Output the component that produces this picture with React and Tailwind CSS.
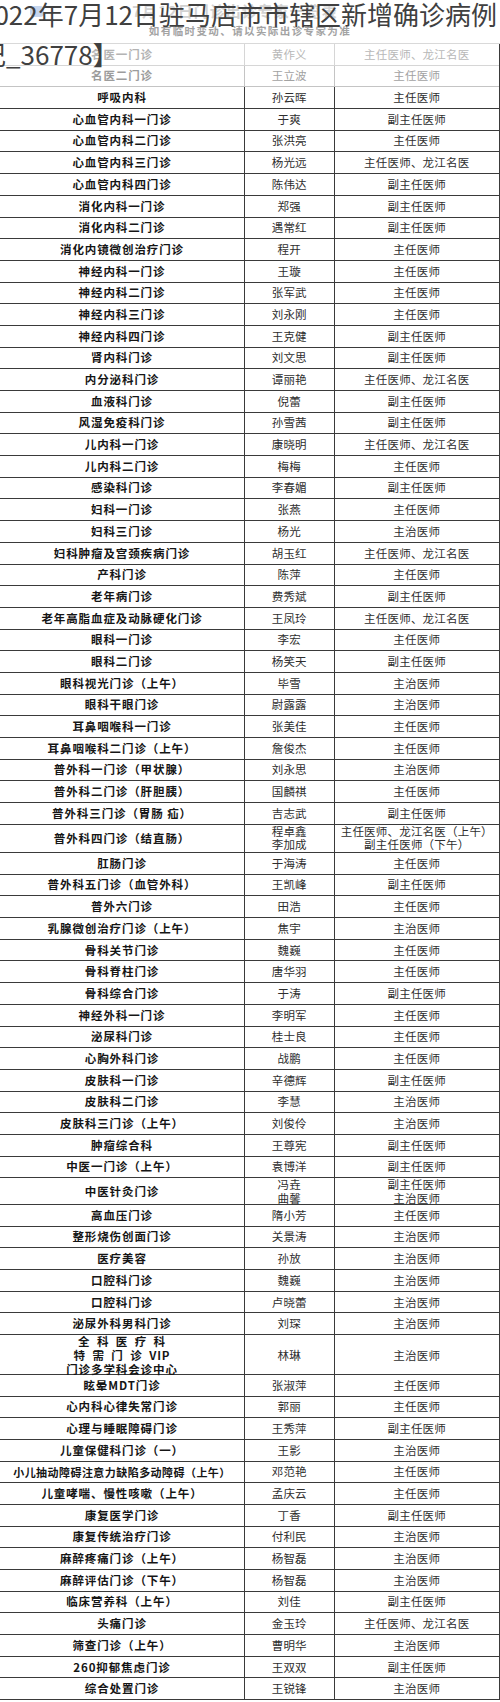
import React from "react";

// 门诊出诊专家表 + 覆盖在上方的大标题
const rows = [
  { d: "名医一门诊", n: "黄作义", t: "主任医师、龙江名医", fade: 1 },
  { d: "名医二门诊", n: "王立波", t: "主任医师", fade: 2 },
  { d: "呼吸内科", n: "孙云晖", t: "主任医师" },
  { d: "心血管内科一门诊", n: "于爽", t: "副主任医师" },
  { d: "心血管内科二门诊", n: "张洪亮", t: "主任医师" },
  { d: "心血管内科三门诊", n: "杨光远", t: "主任医师、龙江名医" },
  { d: "心血管内科四门诊", n: "陈伟达", t: "副主任医师" },
  { d: "消化内科一门诊", n: "郑强", t: "副主任医师" },
  { d: "消化内科二门诊", n: "遇常红", t: "副主任医师" },
  { d: "消化内镜微创治疗门诊", n: "程开", t: "主任医师" },
  { d: "神经内科一门诊", n: "王璇", t: "主任医师" },
  { d: "神经内科二门诊", n: "张军武", t: "主任医师" },
  { d: "神经内科三门诊", n: "刘永刚", t: "主任医师" },
  { d: "神经内科四门诊", n: "王克健", t: "副主任医师" },
  { d: "肾内科门诊", n: "刘文思", t: "副主任医师" },
  { d: "内分泌科门诊", n: "谭丽艳", t: "主任医师、龙江名医" },
  { d: "血液科门诊", n: "倪蕾", t: "副主任医师" },
  { d: "风湿免疫科门诊", n: "孙雪茜", t: "副主任医师" },
  { d: "儿内科一门诊", n: "康晓明", t: "主任医师、龙江名医" },
  { d: "儿内科二门诊", n: "梅梅", t: "主任医师" },
  { d: "感染科门诊", n: "李春媚", t: "副主任医师" },
  { d: "妇科一门诊", n: "张燕", t: "主任医师" },
  { d: "妇科三门诊", n: "杨光", t: "主治医师" },
  { d: "妇科肿瘤及宫颈疾病门诊", n: "胡玉红", t: "主任医师、龙江名医" },
  { d: "产科门诊", n: "陈萍", t: "主任医师" },
  { d: "老年病门诊", n: "费秀斌", t: "副主任医师" },
  { d: "老年高脂血症及动脉硬化门诊", n: "王凤玲", t: "主任医师、龙江名医" },
  { d: "眼科一门诊", n: "李宏", t: "主任医师" },
  { d: "眼科二门诊", n: "杨笑天", t: "副主任医师" },
  { d: "眼科视光门诊（上午）", n: "毕雪", t: "主治医师" },
  { d: "眼科干眼门诊", n: "尉露露", t: "主治医师" },
  { d: "耳鼻咽喉科一门诊", n: "张美佳", t: "主任医师" },
  { d: "耳鼻咽喉科二门诊（上午）", n: "詹俊杰", t: "主任医师" },
  { d: "普外科一门诊（甲状腺）", n: "刘永思", t: "主治医师" },
  { d: "普外科二门诊（肝胆胰）", n: "国麟祺", t: "主任医师" },
  { d: "普外科三门诊（胃肠 疝）", n: "吉志武", t: "副主任医师" },
  {
    d: "普外科四门诊（结直肠）",
    n: ["程卓鑫", "李加成"],
    t: ["主任医师、龙江名医（上午）", "副主任医师（下午）"],
    h: "h-[28.3px]",
  },
  { d: "肛肠门诊", n: "于海涛", t: "主任医师" },
  { d: "普外科五门诊（血管外科）", n: "王凯峰", t: "副主任医师" },
  { d: "普外六门诊", n: "田浩", t: "主任医师" },
  { d: "乳腺微创治疗门诊（上午）", n: "焦宇", t: "主治医师" },
  { d: "骨科关节门诊", n: "魏巍", t: "主任医师" },
  { d: "骨科脊柱门诊", n: "唐华羽", t: "主任医师" },
  { d: "骨科综合门诊", n: "于涛", t: "副主任医师" },
  { d: "神经外科一门诊", n: "李明军", t: "主任医师" },
  { d: "泌尿科门诊", n: "桂士良", t: "主任医师" },
  { d: "心胸外科门诊", n: "战鹏", t: "主任医师" },
  { d: "皮肤科一门诊", n: "辛德辉", t: "副主任医师" },
  { d: "皮肤科二门诊", n: "李慧", t: "主治医师" },
  { d: "皮肤科三门诊（上午）", n: "刘俊伶", t: "主治医师" },
  { d: "肿瘤综合科", n: "王尊宪", t: "副主任医师" },
  { d: "中医一门诊（上午）", n: "袁博洋", t: "副主任医师" },
  {
    d: "中医针灸门诊",
    n: ["冯垚", "曲馨"],
    t: ["副主任医师", "主治医师"],
    h: "h-[26.7px]",
  },
  { d: "高血压门诊", n: "隋小芳", t: "主任医师" },
  { d: "整形烧伤创面门诊", n: "关景涛", t: "主治医师" },
  { d: "医疗美容", n: "孙放", t: "主治医师" },
  { d: "口腔科门诊", n: "魏巍", t: "主治医师" },
  { d: "口腔科门诊", n: "卢晓蕾", t: "主治医师" },
  { d: "泌尿外科男科门诊", n: "刘琛", t: "主治医师" },
  { d: "vip", n: "林琳", t: "主治医师", h: "h-[39.7px]" },
  { d: "眩晕MDT门诊", n: "张淑萍", t: "主任医师" },
  { d: "心内科心律失常门诊", n: "郭丽", t: "主任医师" },
  { d: "心理与睡眠障碍门诊", n: "王秀萍", t: "副主任医师" },
  { d: "儿童保健科门诊（一）", n: "王影", t: "主治医师" },
  { d: "小儿抽动障碍注意力缺陷多动障碍（上午）", n: "邓范艳", t: "主任医师", tight: true },
  { d: "儿童哮喘、慢性咳嗽（上午）", n: "孟庆云", t: "主任医师" },
  { d: "康复医学门诊", n: "丁香", t: "副主任医师" },
  { d: "康复传统治疗门诊", n: "付利民", t: "主治医师" },
  { d: "麻醉疼痛门诊（上午）", n: "杨智磊", t: "主治医师" },
  { d: "麻醉评估门诊（下午）", n: "杨智磊", t: "主治医师" },
  { d: "临床营养科（上午）", n: "刘佳", t: "副主任医师" },
  { d: "头痛门诊", n: "金玉玲", t: "主任医师、龙江名医" },
  { d: "筛查门诊（上午）", n: "曹明华", t: "主治医师" },
  { d: "260抑郁焦虑门诊", n: "王双双", t: "副主任医师" },
  { d: "综合处置门诊", n: "王锐锋", t: "主治医师" },
];

function Lines({ v }) {
  if (!Array.isArray(v)) return v;
  return (
    <div className="flex flex-col items-center leading-[13.5px]">
      {v.map((s, i) => (
        <span key={i}>{s}</span>
      ))}
    </div>
  );
}

function DeptCell({ r }) {
  if (r.d === "vip") {
    return (
      <div className="flex flex-col items-center leading-[13.7px]">
        <div className="flex gap-[6.5px]">
          {["全", "科", "医", "疗", "科"].map((c, i) => (
            <span key={i}>{c}</span>
          ))}
        </div>
        <div className="flex gap-[6.5px]">
          {["特", "需", "门", "诊", "VIP"].map((c, i) => (
            <span key={i}>{c}</span>
          ))}
        </div>
        <span>门诊多学科会诊中心</span>
      </div>
    );
  }
  return r.d;
}

function Row({ r }) {
  const h = r.h || "h-[21.7px]";
  const line = r.fade === 1 ? "border-[#d6d6d6]" : r.fade === 2 ? "border-[#c4c4c4]" : "border-[#3a3a3a]";
  const dept = r.fade === 1 ? "text-[#b4b4b4]" : r.fade === 2 ? "text-[#9c9c9c]" : "text-[#151515]";
  const body = r.fade === 1 ? "text-[#b8b8b8]" : r.fade === 2 ? "text-[#a2a2a2]" : "text-[#2e2e2e]";

  return (
    <div className={`grid grid-cols-[245px_89.5px_1fr] border-b ${line} ${h}`}>
      <div
        className={`flex items-center justify-center border-r ${line} ${dept} font-bold whitespace-nowrap ${
          r.tight ? "text-[11px] tracking-[0.45px]" : "text-[11.5px] tracking-[0.9px]"
        }`}
      >
        <DeptCell r={r} />
      </div>
      <div className={`flex items-center justify-center border-r ${line} ${body} text-[11.5px] tracking-[0.2px]`}>
        <Lines v={r.n} />
      </div>
      <div className={`flex items-center justify-center ${body} text-[11.5px] tracking-[0.2px] whitespace-nowrap`}>
        <Lines v={r.t} />
      </div>
    </div>
  );
}

export default function App() {
  return (
    <div className="relative w-[500px] h-[1702px] overflow-hidden bg-white font-['Noto_Sans_CJK_SC','Noto_Sans',sans-serif]">
      {/* Faded sheet header */}
      <div className="flex h-[44px] flex-col border-b border-[#d9d9d9]">
        <div className="flex h-[23px] items-center px-[30px]">
          <span className="h-[11px] w-[14px] rounded-sm bg-[#c6d6ee]" />
          <span className="flex-1 pr-[44px] text-center text-[15px] font-bold tracking-[1px] text-[#d2d2d2]">
            7月12日门诊出诊专家一览表
          </span>
        </div>
        <div className="text-center text-[10.5px] font-bold tracking-[1.4px] text-[#a3a3a3]">
          如有临时变动、请以实际出诊专家为准
        </div>
      </div>

      <div className="border-r border-[#3a3a3a]">
        {rows.map((r, i) => (
          <Row key={i} r={r} />
        ))}
      </div>

      {/* Overlay title */}
      <div className="absolute left-[-20px] top-[-6px] w-[526px] text-[26px] leading-[40px] text-[#404040]">
        2022年7月12日驻马店市市辖区新增确诊病例记_36778】
      </div>
    </div>
  );
}
